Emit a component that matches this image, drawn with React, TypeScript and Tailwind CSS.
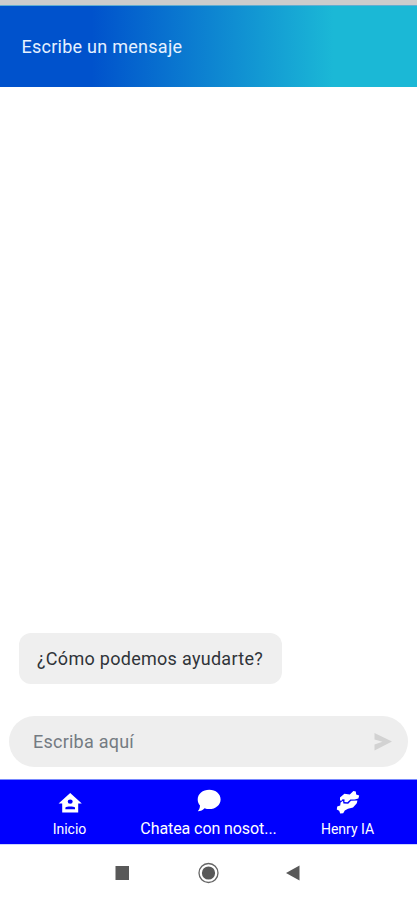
import type { ReactNode } from "react";

function IconoInicio() {
  return (
    <svg viewBox="0 0 24 22" className="h-[22px] w-6" fill="currentColor">
      <path
        fillRule="evenodd"
        d="M12.2 1 23.8 11.4H20.2V20.6H4.2V11.4H.6ZM12.2 7.4A2.5 2.2 0 1 0 12.2 11.8A2.5 2.2 0 1 0 12.2 7.4ZM7.4 17.2H17V15.6C16.2 14.8 14.4 14.5 12.2 14.5S8.2 14.8 7.4 15.6Z"
      />
    </svg>
  );
}

function IconoChat() {
  return (
    <svg viewBox="0 0 24 23" className="h-[23px] w-6" fill="currentColor">
      <path d="M12.3 .8C18.7 .8 23.6 5 23.6 10.4S18.7 20.1 12.3 20.1C10.6 20.1 9 19.8 7.6 19.2C5.8 21 3.7 22.1 .8 22.2C2.2 20.5 2.9 18.7 3 16.4C1.5 14.8 .7 12.7 .7 10.4C.7 5 5.8 .8 12.3 .8Z" />
    </svg>
  );
}

function IconoHenry() {
  return (
    <svg viewBox="0 0 24 24" className="size-6" fill="currentColor">
      <path d="M4 10.4V7.4L8.4 3.8 13.8 4.6 17.4 1 19.8 1.6 20.2 4.4 23.2 5.6 22.4 8.4 18.6 9.4H14.4L11.4 12.2 8.4 12 8.6 9.4 6.6 9.2 5.4 10.8Z" />
      <path d="M4.6 12.4 7 10.8 7.4 13.4 12.2 13.8 15 10.8 21.4 10.4 20.8 13.2 17 17.4 12 18.8 8.8 20.6 7.2 23.2 4.2 23.4 3.2 20.8 .8 19.6 1.2 16.6 4.2 15.4Z" />
    </svg>
  );
}

function Pestana({
  icono,
  texto,
  activa = false,
}: {
  icono: ReactNode;
  texto: string;
  activa?: boolean;
}) {
  return (
    <button
      type="button"
      className="flex h-full flex-1 flex-col items-center justify-end pb-[6px] text-white"
    >
      {icono}
      <span
        className={
          activa
            ? "mt-[7px] h-[19px] text-[16px] leading-5 tracking-[-0.08px] whitespace-nowrap"
            : "mt-[6px] h-[18px] text-[14px] leading-[18px] whitespace-nowrap"
        }
      >
        {texto}
      </span>
    </button>
  );
}

export default function App() {
  return (
    <div className="flex h-[900px] w-full flex-col overflow-hidden bg-white font-[Roboto,sans-serif]">
      <div className="h-[5px] shrink-0 bg-[#cccccc]" />
      <header className="flex h-[82px] shrink-0 items-center border-t border-[#62aed1] bg-linear-to-r/srgb from-[#0052cc] from-22% to-[#1bb8d6] to-80% pl-[21.5px]">
        <h1 className="text-[18px] leading-6 tracking-[0.26px] text-[#e6f1ff]">
          Escribe un mensaje
        </h1>
      </header>

      <main className="flex flex-1 flex-col justify-end">
        <p className="mb-8 ml-[19px] flex h-[51px] w-[263px] items-center rounded-[12px] bg-[#efefef] pl-[18px] text-[18px] tracking-[0.29px] whitespace-nowrap text-[#303439]">
          ¿Cómo podemos ayudarte?
        </p>
        <form
          className="mx-[9px] mb-[12px] flex h-[51px] items-center rounded-full bg-[#eeeeee] pr-[15px] pl-6"
          onSubmit={(e) => e.preventDefault()}
        >
          <input
            type="text"
            placeholder="Escriba aquí"
            className="min-w-0 flex-1 bg-transparent text-[18px] tracking-[0.24px] outline-none placeholder:text-[#747b82]"
          />
          <button type="submit" aria-label="Enviar" className="text-[#d2d2d2]">
            <svg viewBox="0 0 20 20" className="size-5" fill="currentColor">
              <path d="M1.5 1 19 9.5 1.5 18.5V12.5L9.5 9.7 1.5 7.5Z" />
            </svg>
          </button>
        </form>
      </main>

      <nav className="flex h-[65px] shrink-0 border-t border-[#7788ff] bg-[#0000fe]">
        <Pestana icono={<IconoInicio />} texto="Inicio" />
        <Pestana icono={<IconoChat />} texto="Chatea con nosot..." activa />
        <Pestana icono={<IconoHenry />} texto="Henry IA" />
      </nav>

      <div className="h-14 shrink-0 border-t border-[#ccd4ff]">
        <svg viewBox="0 0 417 55" className="h-[55px] w-full" fill="#595959">
          <rect x="115.5" y="21" width="13.5" height="14" />
          <circle cx="208.5" cy="28" r="9.5" fill="none" stroke="#666" strokeWidth="1.3" />
          <circle cx="208.5" cy="28" r="6.6" />
          <path d="M286 28 299.5 20.5V35.5Z" />
        </svg>
      </div>
    </div>
  );
}
